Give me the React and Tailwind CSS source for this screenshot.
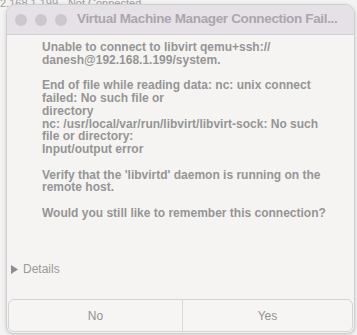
import React from 'react';

const font = { fontFamily: '"Liberation Sans", Arial, sans-serif' };

const Paragraph = ({ lines }) => (
  <div className="mb-[13px]">
    {lines.map((l, i) => (
      <div key={i} className="whitespace-nowrap">{l}</div>
    ))}
  </div>
);

const App = () => {
  return (
    <div className="relative w-[357px] h-[335px] bg-[#f3f3f3] overflow-hidden" style={font}>
      <div className="absolute left-0 top-[-5px] text-[11px] text-[#a0a0a0] whitespace-nowrap">
        2.168.1.199 - Not Connected
      </div>
      <div className="absolute left-[6px] top-[4px] w-[349px] h-[330px] flex flex-col rounded-t-[10px] rounded-b-[8px] border border-[#cfcdd0] bg-[#f5f4f2] shadow-[0_1px_4px_rgba(0,0,0,0.15)] overflow-hidden">
        <div className="h-[30px] flex items-center bg-[#e5e1e7] border-b border-[#d2cfd4] shrink-0">
          <div className="flex items-center gap-[8px] pl-[8px]">
            <span className="w-[12px] h-[12px] rounded-full bg-[#cbc7ce]" />
            <span className="w-[12px] h-[12px] rounded-full bg-[#cbc7ce]" />
            <span className="w-[12px] h-[12px] rounded-full bg-[#cbc7ce]" />
          </div>
          <div className="ml-[10px] text-[13.5px] tracking-[-0.35px] font-bold text-[#aaa6ad] whitespace-nowrap">
            Virtual Machine Manager Connection Fail...
          </div>
        </div>
        <div className="flex-1 flex flex-col">
          <div className="pl-[35px] pt-[6px] text-[12px] leading-[12.7px] font-bold text-[#959595]">
            <Paragraph lines={['Unable to connect to libvirt qemu+ssh://', 'danesh@192.168.1.199/system.']} />
            <Paragraph
              lines={[
                'End of file while reading data: nc: unix connect',
                'failed: No such file or',
                'directory',
                'nc: /usr/local/var/run/libvirt/libvirt-sock: No such',
                'file or directory:',
                'Input/output error',
              ]}
            />
            <Paragraph lines={["Verify that the 'libvirtd' daemon is running on the", 'remote host.']} />
            <Paragraph lines={['Would you still like to remember this connection?']} />
          </div>
          <div className="mt-auto flex items-center gap-[5px] pl-[4px] pb-[21px] text-[12px] text-[#999999]">
            <svg width="7" height="9" viewBox="0 0 7 9">
              <path d="M0 0 L7 4.5 L0 9 Z" fill="#8e8e8e" />
            </svg>
            <span>Details</span>
          </div>
          <div className="mx-[1px] mb-[1px] flex h-[33px] rounded-[6px] border border-[#d3d3d3] bg-[#f6f5f3] text-[12px] text-[#929292]">
            <div className="w-[174px] flex items-center justify-center border-r border-[#d8d8d8]">No</div>
            <div className="flex-1 flex items-center justify-center">Yes</div>
          </div>
        </div>
      </div>
    </div>
  );
};

export default App;
